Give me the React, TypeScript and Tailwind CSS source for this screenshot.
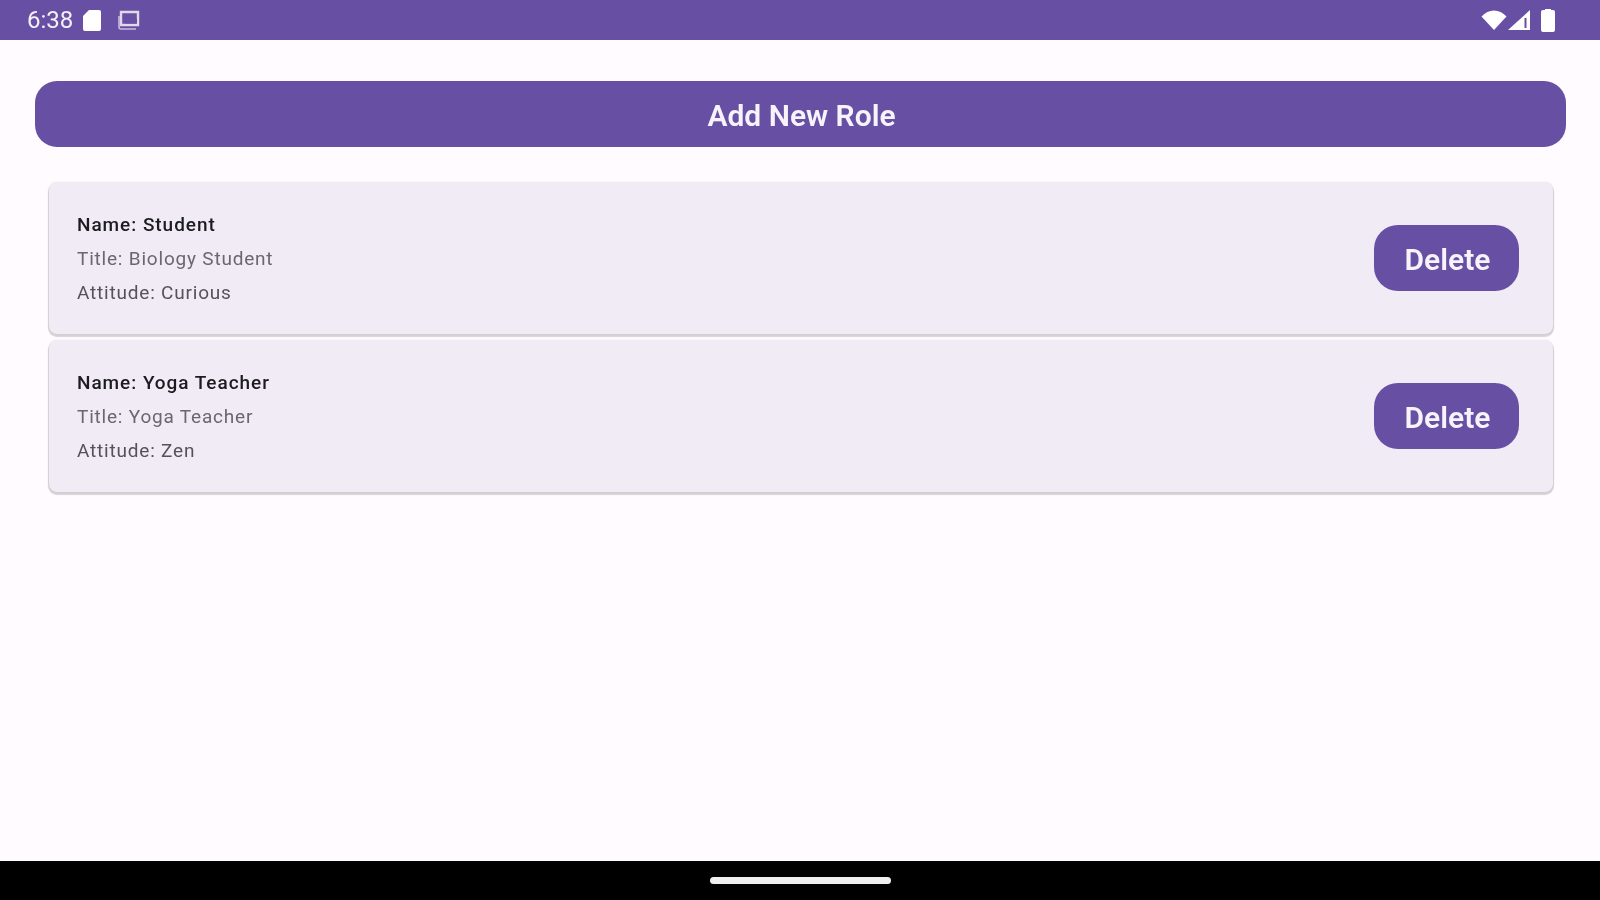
import React from "react";

const font = { fontFamily: "Roboto, sans-serif" };

function RoleCard({ name, title, attitude }: { name: string; title: string; attitude: string }) {
  return (
    <div className="flex h-[152px] items-center justify-between rounded-[8px] bg-[#f0ebf5] pl-[28px] pr-[34px] shadow-[0_2px_1px_1px_rgba(0,0,0,0.16),0_0_2px_rgba(0,0,0,0.1)]">
      <div className="flex translate-y-[1px] flex-col gap-[10px] text-[19px] leading-[24px] tracking-[0.8px]">
        <div className="font-medium tracking-[0.95px] text-[#1c1b1f]">Name: {name}</div>
        <div className="text-[#6a6771]">Title: {title}</div>
        <div className="text-[#55525b]">Attitude: {attitude}</div>
      </div>
      <button className="flex h-[66px] w-[145px] items-center justify-center rounded-[24px] bg-[#674fa3] pl-[2px] pt-[2px] text-[30px] font-semibold text-[#f6f3fa]">
        Delete
      </button>
    </div>
  );
}

export default function App() {
  return (
    <div className="flex h-[900px] w-[1600px] flex-col overflow-hidden bg-[#fffbfe] blur-[0.7px]" style={font}>
      <div className="flex h-[40px] shrink-0 items-center justify-between bg-[#674fa3] pl-[27px] pr-[45px] text-[#f3f0f8]">
        <div className="flex items-center">
          <span className="text-[24px] leading-none tracking-[0px]">6:38</span>
          <svg className="ml-[9px]" width="20" height="23" viewBox="0 0 20 23">
            <path d="M7 1h10a2 2 0 0 1 2 2v17a2 2 0 0 1-2 2H3a2 2 0 0 1-2-2V7z" fill="#fff" />
          </svg>
          <svg className="ml-[15px]" width="24" height="22" viewBox="0 0 24 22" fill="none" stroke="#e0d9ec" strokeWidth="2.4">
            <path d="M4 3h17v13H4z" />
            <path d="M8 12h12" strokeWidth="5" stroke="#674fa3" />
            <path d="M2 7v11a2 2 0 0 0 2 2h15" strokeWidth="1.6" stroke="#c9bfde" />
          </svg>
        </div>
        <div className="flex items-center">
          <svg width="26" height="22" viewBox="0 0 26 22">
            <path d="M0.5 7.5C4 3.5 8.5 1.5 13 1.5s9 2 12.5 6L13 21z" fill="#fff" />
          </svg>
          <svg width="24" height="22" viewBox="0 0 24 22">
            <path d="M1 21 23 1v20z" fill="#fff" />
            <path d="M17.5 9h2v10h-2z" fill="#674fa3" />
          </svg>
          <svg className="ml-[10px]" width="14" height="24" viewBox="0 0 14 24">
            <path d="M4 2V1h6v1h2a2 2 0 0 1 2 2v18a2 2 0 0 1-2 2H2a2 2 0 0 1-2-2V4a2 2 0 0 1 2-2z" fill="#fff" />
          </svg>
        </div>
      </div>

      <div className="flex flex-1 flex-col pl-[35px] pr-[34px] pt-[41px]">
        <button className="flex h-[66px] w-full shrink-0 items-center justify-center rounded-[22px] bg-[#674fa3] pl-[2px] pt-[2px] text-[30px] font-semibold text-[#f6f3fa]">
          Add New Role
        </button>
        <div className="mt-[35px] flex flex-col gap-[6px] pl-[14px] pr-[13px]">
          <RoleCard name="Student" title="Biology Student" attitude="Curious" />
          <RoleCard name="Yoga Teacher" title="Yoga Teacher" attitude="Zen" />
        </div>
      </div>

      <div className="flex h-[39px] shrink-0 items-center justify-center bg-black">
        <div className="h-[7px] w-[181px] rounded-full bg-[#f0f0f0]" />
      </div>
    </div>
  );
}
